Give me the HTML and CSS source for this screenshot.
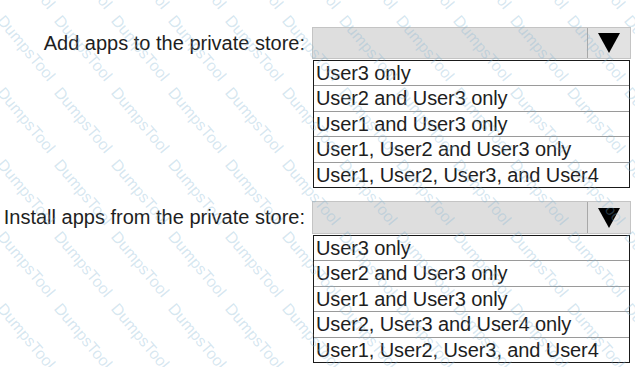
FILE: index.html
```html
<!DOCTYPE html>
<html>
<head>
<meta charset="utf-8">
<link rel="stylesheet" href="styles.css">
</head>
<body>
<div class="page">
  <div class="question q1">
    <div class="label">Add apps to the private store:</div>
    <div class="dropdown">
      <div class="select">
        <div class="field"></div>
        <div class="arrow"><svg width="22" height="20" viewBox="0 0 22 20"><polygon points="0,0 22,0 11,20" fill="#000"/></svg></div>
      </div>
      <ul class="options">
        <li>User3 only</li>
        <li>User2 and User3 only</li>
        <li>User1 and User3 only</li>
        <li>User1, User2 and User3 only</li>
        <li>User1, User2, User3, and User4</li>
      </ul>
    </div>
  </div>
  <div class="question q2">
    <div class="label">Install apps from the private store:</div>
    <div class="dropdown">
      <div class="select">
        <div class="field"></div>
        <div class="arrow"><svg width="22" height="20" viewBox="0 0 22 20"><polygon points="0,0 22,0 11,20" fill="#000"/></svg></div>
      </div>
      <ul class="options">
        <li>User3 only</li>
        <li>User2 and User3 only</li>
        <li>User1 and User3 only</li>
        <li>User2, User3 and User4 only</li>
        <li>User1, User2, User3, and User4</li>
      </ul>
    </div>
  </div>
</div>
<div class="watermark" aria-hidden="true">
  <div class="wm-grid">
    <span>DumpsTool</span><span>DumpsTool</span><span>DumpsTool</span><span>DumpsTool</span><span>DumpsTool</span><span>DumpsTool</span><span>DumpsTool</span><span>DumpsTool</span><span>DumpsTool</span><span>DumpsTool</span><span>DumpsTool</span><span>DumpsTool</span><span>DumpsTool</span>
    <span>DumpsTool</span><span>DumpsTool</span><span>DumpsTool</span><span>DumpsTool</span><span>DumpsTool</span><span>DumpsTool</span><span>DumpsTool</span><span>DumpsTool</span><span>DumpsTool</span><span>DumpsTool</span><span>DumpsTool</span><span>DumpsTool</span><span>DumpsTool</span>
    <span>DumpsTool</span><span>DumpsTool</span><span>DumpsTool</span><span>DumpsTool</span><span>DumpsTool</span><span>DumpsTool</span><span>DumpsTool</span><span>DumpsTool</span><span>DumpsTool</span><span>DumpsTool</span><span>DumpsTool</span><span>DumpsTool</span><span>DumpsTool</span>
    <span>DumpsTool</span><span>DumpsTool</span><span>DumpsTool</span><span>DumpsTool</span><span>DumpsTool</span><span>DumpsTool</span><span>DumpsTool</span><span>DumpsTool</span><span>DumpsTool</span><span>DumpsTool</span><span>DumpsTool</span><span>DumpsTool</span><span>DumpsTool</span>
    <span>DumpsTool</span><span>DumpsTool</span><span>DumpsTool</span><span>DumpsTool</span><span>DumpsTool</span><span>DumpsTool</span><span>DumpsTool</span><span>DumpsTool</span><span>DumpsTool</span><span>DumpsTool</span><span>DumpsTool</span><span>DumpsTool</span><span>DumpsTool</span>
    <span>DumpsTool</span><span>DumpsTool</span><span>DumpsTool</span><span>DumpsTool</span><span>DumpsTool</span><span>DumpsTool</span><span>DumpsTool</span><span>DumpsTool</span><span>DumpsTool</span><span>DumpsTool</span><span>DumpsTool</span><span>DumpsTool</span><span>DumpsTool</span>
    <span>DumpsTool</span><span>DumpsTool</span><span>DumpsTool</span><span>DumpsTool</span><span>DumpsTool</span><span>DumpsTool</span><span>DumpsTool</span><span>DumpsTool</span><span>DumpsTool</span><span>DumpsTool</span><span>DumpsTool</span><span>DumpsTool</span><span>DumpsTool</span>
  </div>
</div>
</body>
</html>
```
FILE: styles.css
```css
html, body {
  margin: 0;
  padding: 0;
  background: #fff;
}
body {
  width: 635px;
  height: 367px;
  overflow: hidden;
  position: relative;
  font-family: "Liberation Sans", Arial, sans-serif;
  color: #1e1e1e;
}
.page {
  padding-top: 27px;
  display: flex;
  flex-direction: column;
  gap: 13px;
}
.question {
  display: grid;
  grid-template-columns: 312px 319px;
  align-items: start;
}
.label {
  font-size: 20px;
  text-align: right;
  padding-right: 7px;
  white-space: nowrap;
  line-height: 32px;
}
.dropdown {
  display: flex;
  flex-direction: column;
  gap: 1px;
}
.select {
  display: flex;
  height: 32px;
  box-sizing: border-box;
  border: 1px solid #c4c4c4;
  background: #dedede;
}
.q2 .select {
  height: 33px;
}
.field {
  flex: 1;
  border-right: 1px solid #a8a8a8;
}
.arrow {
  width: 42px;
  display: flex;
  align-items: center;
  justify-content: center;
  background: #e2e2e2;
}
.options {
  list-style: none;
  margin: 0 0 0 1px;
  padding: 0;
  width: 317px;
  border: 1px solid #1a1a1a;
  box-sizing: border-box;
}
.options li {
  font-size: 20px;
  letter-spacing: -0.1px;
  line-height: 24.4px;
  padding-left: 2px;
  white-space: nowrap;
  border-top: 1px solid #9a9a9a;
}
.options li:first-child {
  border-top: none;
}
.watermark {
  position: absolute;
  left: 0;
  top: 0;
  width: 635px;
  height: 367px;
  overflow: hidden;
  pointer-events: none;
}
.wm-grid {
  margin-left: -50px;
  margin-top: -60px;
  width: 760px;
  display: grid;
  grid-template-columns: repeat(13, 57px);
  grid-auto-rows: 72px;
}
.wm-grid span {
  display: block;
  font-family: "Liberation Sans", Arial, sans-serif;
  font-size: 16px;
  color: rgba(130, 180, 210, 0.32);
  transform: rotate(50deg);
  transform-origin: 0 0;
  white-space: nowrap;
}
```
